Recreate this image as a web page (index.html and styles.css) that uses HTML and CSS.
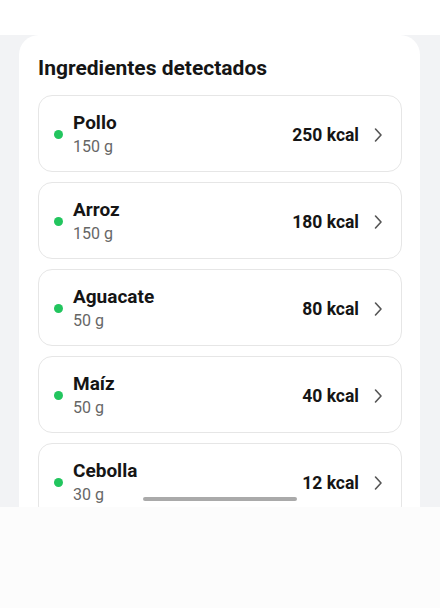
FILE: index.html
```html
<!DOCTYPE html>
<html lang="es">
<head>
  <meta charset="UTF-8">
  <meta name="viewport" content="width=device-width, initial-scale=1.0">
  <title>Ingredientes detectados</title>
  <link rel="stylesheet" href="styles.css">
</head>
<body>

<div class="top-space"></div>

<div class="screen">
  <div class="card">
    <h2 class="card-title">Ingredientes detectados</h2>

    <div class="list">
      <div class="item">
        <span class="dot"></span>
        <div class="info">
          <div class="name">Pollo</div>
          <div class="weight">150 g</div>
        </div>
        <div class="kcal">250 kcal</div>
        <svg class="chevron" viewBox="0 0 16 16"><path d="M5.5 2 L11 8 L5.5 14"/></svg>
      </div>

      <div class="item">
        <span class="dot"></span>
        <div class="info">
          <div class="name">Arroz</div>
          <div class="weight">150 g</div>
        </div>
        <div class="kcal">180 kcal</div>
        <svg class="chevron" viewBox="0 0 16 16"><path d="M5.5 2 L11 8 L5.5 14"/></svg>
      </div>

      <div class="item">
        <span class="dot"></span>
        <div class="info">
          <div class="name">Aguacate</div>
          <div class="weight">50 g</div>
        </div>
        <div class="kcal">80 kcal</div>
        <svg class="chevron" viewBox="0 0 16 16"><path d="M5.5 2 L11 8 L5.5 14"/></svg>
      </div>

      <div class="item">
        <span class="dot"></span>
        <div class="info">
          <div class="name">Maíz</div>
          <div class="weight">50 g</div>
        </div>
        <div class="kcal">40 kcal</div>
        <svg class="chevron" viewBox="0 0 16 16"><path d="M5.5 2 L11 8 L5.5 14"/></svg>
      </div>

      <div class="item">
        <span class="dot"></span>
        <div class="info">
          <div class="name">Cebolla</div>
          <div class="weight">30 g</div>
        </div>
        <div class="kcal">12 kcal</div>
        <svg class="chevron" viewBox="0 0 16 16"><path d="M5.5 2 L11 8 L5.5 14"/></svg>
      </div>
    </div>
  </div>

  <div class="home-bar"></div>
</div>

</body>
</html>
```

FILE: styles.css
```css
body {
  margin: 0;
  font-family: Roboto, "Noto Sans", sans-serif;
  background-color: #fcfcfc;
  color: #111;
}

.top-space {
  height: 35px;
  background-color: #fff;
}

.screen {
  position: relative;
  height: 472px;
  overflow: hidden;
  background-color: #f2f3f5;
  padding-left: 19px;
  padding-right: 20px;
}

.card {
  background-color: #fff;
  border-radius: 20px 20px 0 0;
  padding: 21px 18px 0 19px;
  height: 100%;
  box-sizing: border-box;
}

.card-title {
  margin: 0 0 15px 0;
  font-size: 21px;
  line-height: 24px;
  font-weight: 700;
  color: #151515;
}

.list {
  display: flex;
  flex-direction: column;
  gap: 10px;
}

.item {
  display: flex;
  align-items: center;
  border: 1px solid #e6e6e6;
  border-radius: 14px;
  padding: 16px 15px 14px 15px;
  background-color: #fff;
}

.dot {
  width: 9px;
  height: 9px;
  border-radius: 50%;
  background-color: #22c55e;
  margin-right: 10px;
  flex-shrink: 0;
}

.info {
  flex: 1;
}

.name {
  font-size: 19px;
  line-height: 22px;
  font-weight: 700;
  color: #151515;
}

.weight {
  margin-top: 3px;
  font-size: 16px;
  line-height: 20px;
  color: #666;
}

.kcal {
  font-size: 17.5px;
  font-weight: 700;
  color: #151515;
  margin-right: 11px;
}

.chevron {
  width: 16px;
  height: 16px;
  fill: none;
  stroke: #555;
  stroke-width: 1.6;
  stroke-linecap: round;
  stroke-linejoin: round;
}

.home-bar {
  position: absolute;
  left: 143px;
  top: 462px;
  width: 154px;
  height: 4px;
  border-radius: 2px;
  background-color: #aaa;
}
```
